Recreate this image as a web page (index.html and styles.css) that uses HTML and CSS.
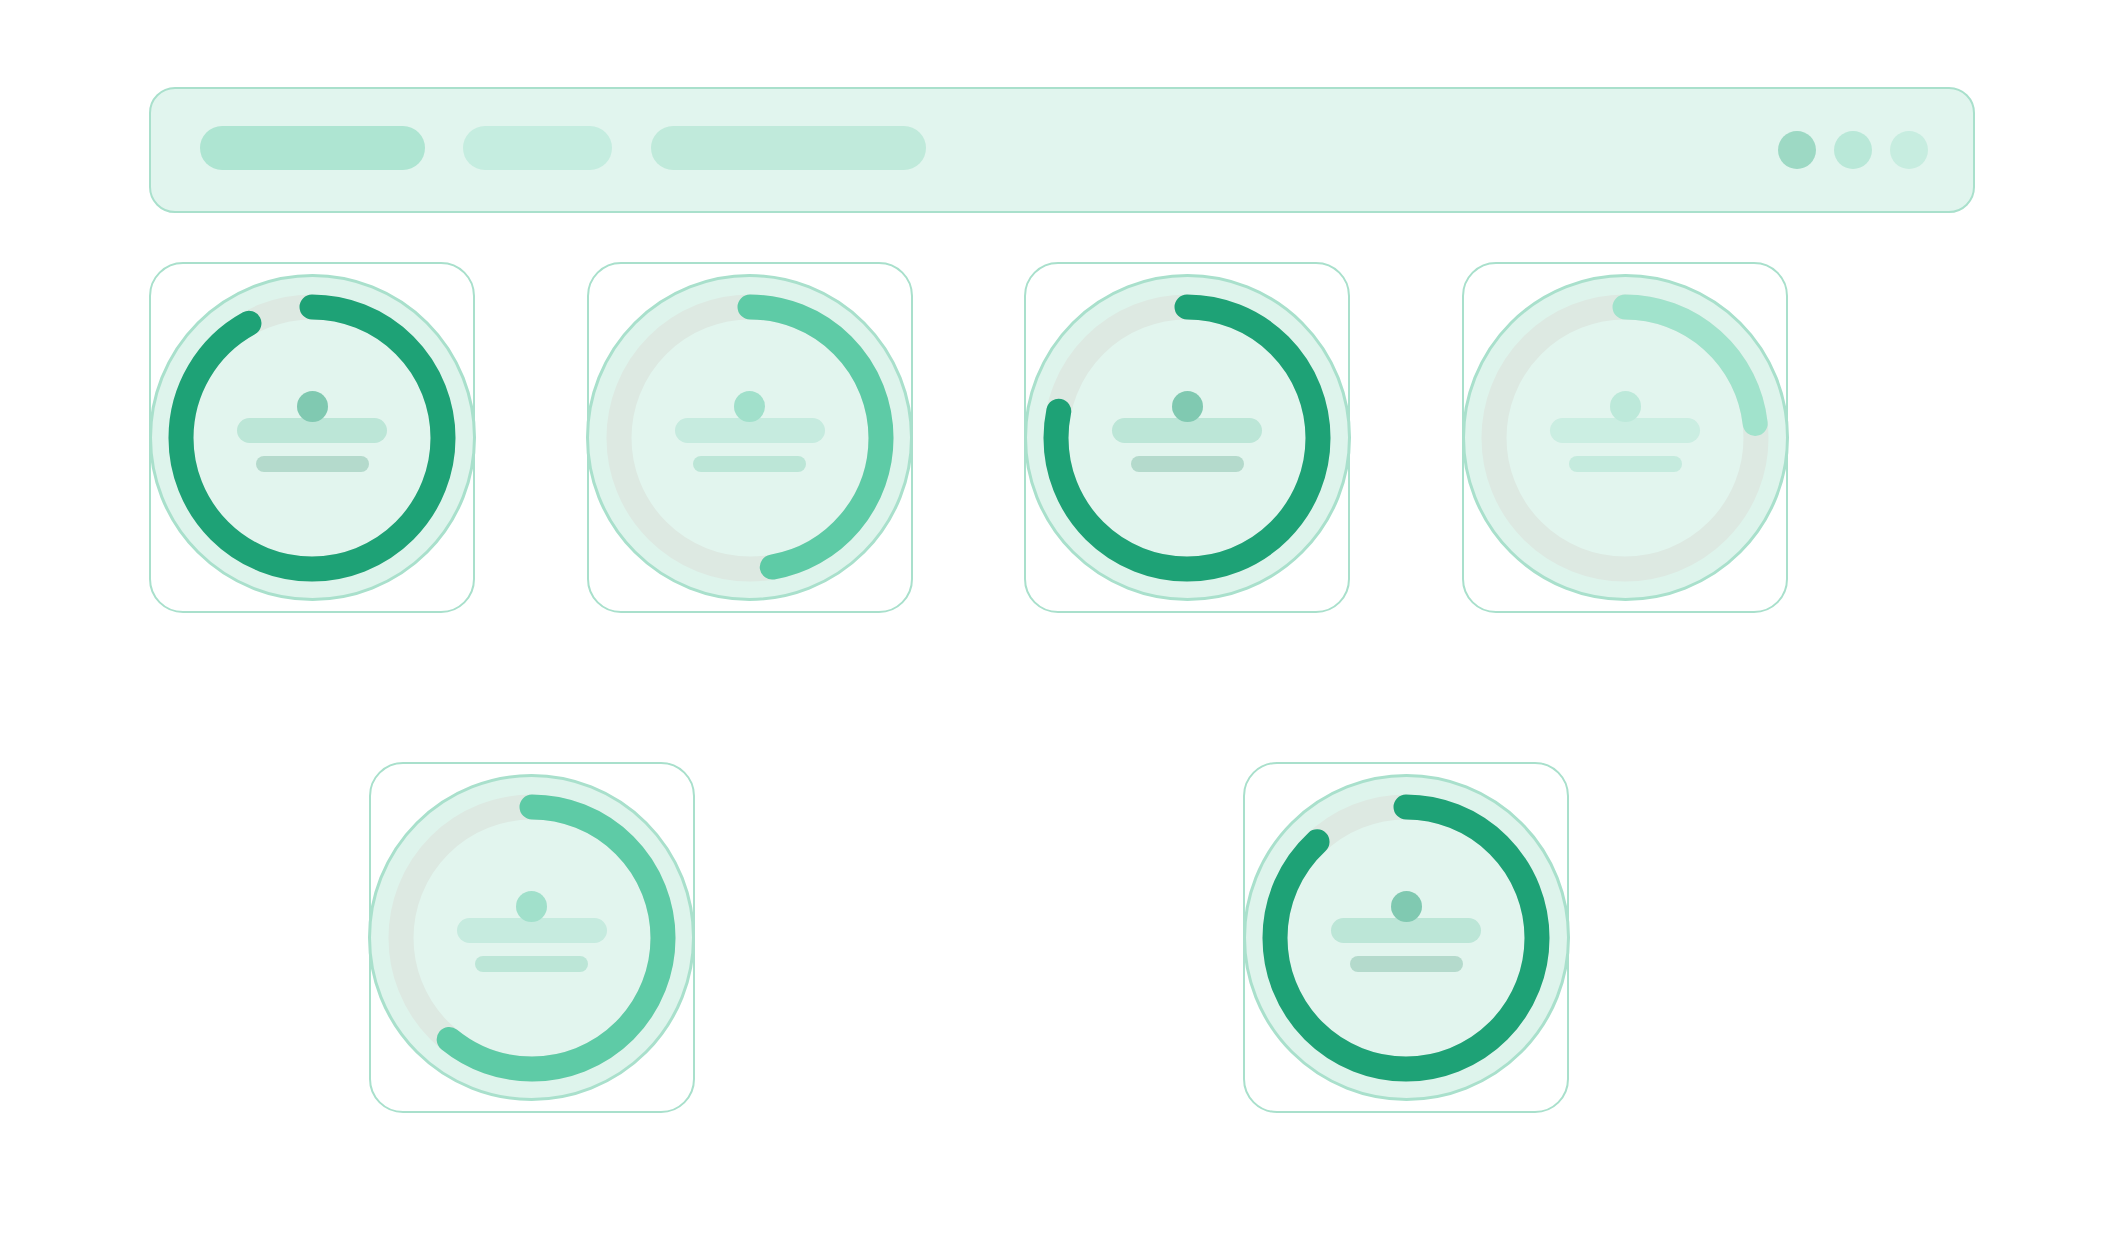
FILE: index.html
```html
<!DOCTYPE html>
<html lang="en">
<head>
<meta charset="utf-8">
<title>Progress rings</title>
<link rel="stylesheet" href="styles.css">
</head>
<body>
<div class="page">
  <header class="topbar">
    <div class="pill pill-a"></div>
    <div class="pill pill-b"></div>
    <div class="pill pill-c"></div>
    <div class="dots">
      <span class="dot dot-a"></span>
      <span class="dot dot-b"></span>
      <span class="dot dot-c"></span>
    </div>
  </header>

  <section class="row row-top">
    <div class="card dark">
      <div class="gauge">
        <svg class="ring" viewBox="0 0 324 324"><circle class="disk" cx="162" cy="162" r="119"/><circle class="track" cx="162" cy="162" r="131"/><circle class="arc" cx="162" cy="162" r="131" style="stroke-dasharray: 757 900"/></svg>
        <div class="info"><span class="knob"></span><span class="bar bar-1"></span><span class="bar bar-2"></span></div>
      </div>
    </div>
    <div class="card medium">
      <div class="gauge">
        <svg class="ring" viewBox="0 0 324 324"><circle class="disk" cx="162" cy="162" r="119"/><circle class="track" cx="162" cy="162" r="131"/><circle class="arc" cx="162" cy="162" r="131" style="stroke-dasharray: 389 900"/></svg>
        <div class="info"><span class="knob"></span><span class="bar bar-1"></span><span class="bar bar-2"></span></div>
      </div>
    </div>
    <div class="card dark">
      <div class="gauge">
        <svg class="ring" viewBox="0 0 324 324"><circle class="disk" cx="162" cy="162" r="119"/><circle class="track" cx="162" cy="162" r="131"/><circle class="arc" cx="162" cy="162" r="131" style="stroke-dasharray: 644 900"/></svg>
        <div class="info"><span class="knob"></span><span class="bar bar-1"></span><span class="bar bar-2"></span></div>
      </div>
    </div>
    <div class="card light">
      <div class="gauge">
        <svg class="ring" viewBox="0 0 324 324"><circle class="disk" cx="162" cy="162" r="119"/><circle class="track" cx="162" cy="162" r="131"/><circle class="arc" cx="162" cy="162" r="131" style="stroke-dasharray: 191 900"/></svg>
        <div class="info"><span class="knob"></span><span class="bar bar-1"></span><span class="bar bar-2"></span></div>
      </div>
    </div>
  </section>

  <section class="row row-bottom">
    <div class="card medium">
      <div class="gauge">
        <svg class="ring" viewBox="0 0 324 324"><circle class="disk" cx="162" cy="162" r="119"/><circle class="track" cx="162" cy="162" r="131"/><circle class="arc" cx="162" cy="162" r="131" style="stroke-dasharray: 501 900"/></svg>
        <div class="info"><span class="knob"></span><span class="bar bar-1"></span><span class="bar bar-2"></span></div>
      </div>
    </div>
    <div class="card dark">
      <div class="gauge">
        <svg class="ring" viewBox="0 0 324 324"><circle class="disk" cx="162" cy="162" r="119"/><circle class="track" cx="162" cy="162" r="131"/><circle class="arc" cx="162" cy="162" r="131" style="stroke-dasharray: 725 900"/></svg>
        <div class="info"><span class="knob"></span><span class="bar bar-1"></span><span class="bar bar-2"></span></div>
      </div>
    </div>
  </section>
</div>
</body>
</html>
```
FILE: styles.css
```css
* { box-sizing: border-box; }

html, body {
  margin: 0;
  padding: 0;
  background: #ffffff;
  font-family: "Liberation Sans", Arial, sans-serif;
}

.page {
  padding: 87px 0 0 149px;
}

.topbar {
  width: 1826px;
  height: 126px;
  background: #e1f5ee;
  border: 2px solid #a9e0cc;
  border-radius: 26px;
  display: flex;
  align-items: center;
  padding: 0 45px 0 49px;
}

.pill {
  height: 44px;
  border-radius: 22px;
  margin-top: -4px;
}
.pill-a { width: 225px; background: #aee5d2; }
.pill-b { width: 149px; background: #c5ede0; margin-left: 38px; }
.pill-c { width: 275px; background: #c0eadb; margin-left: 39px; }

.dots {
  margin-left: auto;
  display: flex;
  gap: 18px;
}
.dot {
  width: 38px;
  height: 38px;
  border-radius: 50%;
}
.dot-a { background: #9dd9c4; }
.dot-b { background: #b9e8d8; }
.dot-c { background: #c7ede0; }

.row {
  display: flex;
}
.row-top {
  margin-top: 49px;
  gap: 111.7px;
}
.row-bottom {
  margin-top: 149px;
  padding-left: 219.5px;
  gap: 548.5px;
}

.card {
  width: 326px;
  height: 351px;
  flex: none;
  border: 2px solid #a9e0cc;
  border-radius: 34px;
  background: #ffffff;
  display: flex;
  align-items: center;
  justify-content: center;
}

.gauge {
  position: relative;
  flex: none;
  width: 327px;
  height: 327px;
  border-radius: 50%;
  background: #def4ec;
  border: 3px solid #a9e0cc;
  display: flex;
  align-items: center;
  justify-content: center;
}

.ring {
  position: absolute;
  left: -1.5px;
  top: -1.5px;
  width: 324px;
  height: 324px;
}
.ring .disk { fill: #e2f5ee; }
.ring .track {
  fill: none;
  stroke: #dde9e2;
  stroke-width: 25;
}
.ring .arc {
  fill: none;
  stroke-width: 25;
  stroke-linecap: round;
  transform: rotate(-90deg);
  transform-origin: 162px 162px;
}

.info {
  position: relative;
  display: flex;
  flex-direction: column;
  align-items: center;
  margin-top: -12px;
}
.knob {
  width: 31px;
  height: 31px;
  border-radius: 50%;
  position: relative;
  z-index: 1;
}
.bar {
  display: block;
  border-radius: 13px;
}
.bar-1 {
  width: 150px;
  height: 25px;
  margin-top: -4px;
}
.bar-2 {
  width: 113px;
  height: 16px;
  margin-top: 13px;
}

.dark .arc { stroke: #1ea276; }
.dark .knob { background: #80c9b1; }
.dark .bar-1 { background: #bce6d7; }
.dark .bar-2 { background: #b4dacc; }

.medium .arc { stroke: #5ecba6; }
.medium .knob { background: #a1e0cb; }
.medium .bar-1 { background: #c6ebdf; }
.medium .bar-2 { background: #bce6d7; }

.light .arc { stroke: #a1e3cc; }
.light .knob { background: #bde9da; }
.light .bar-1 { background: #cbeee2; }
.light .bar-2 { background: #c5ebde; }
```
